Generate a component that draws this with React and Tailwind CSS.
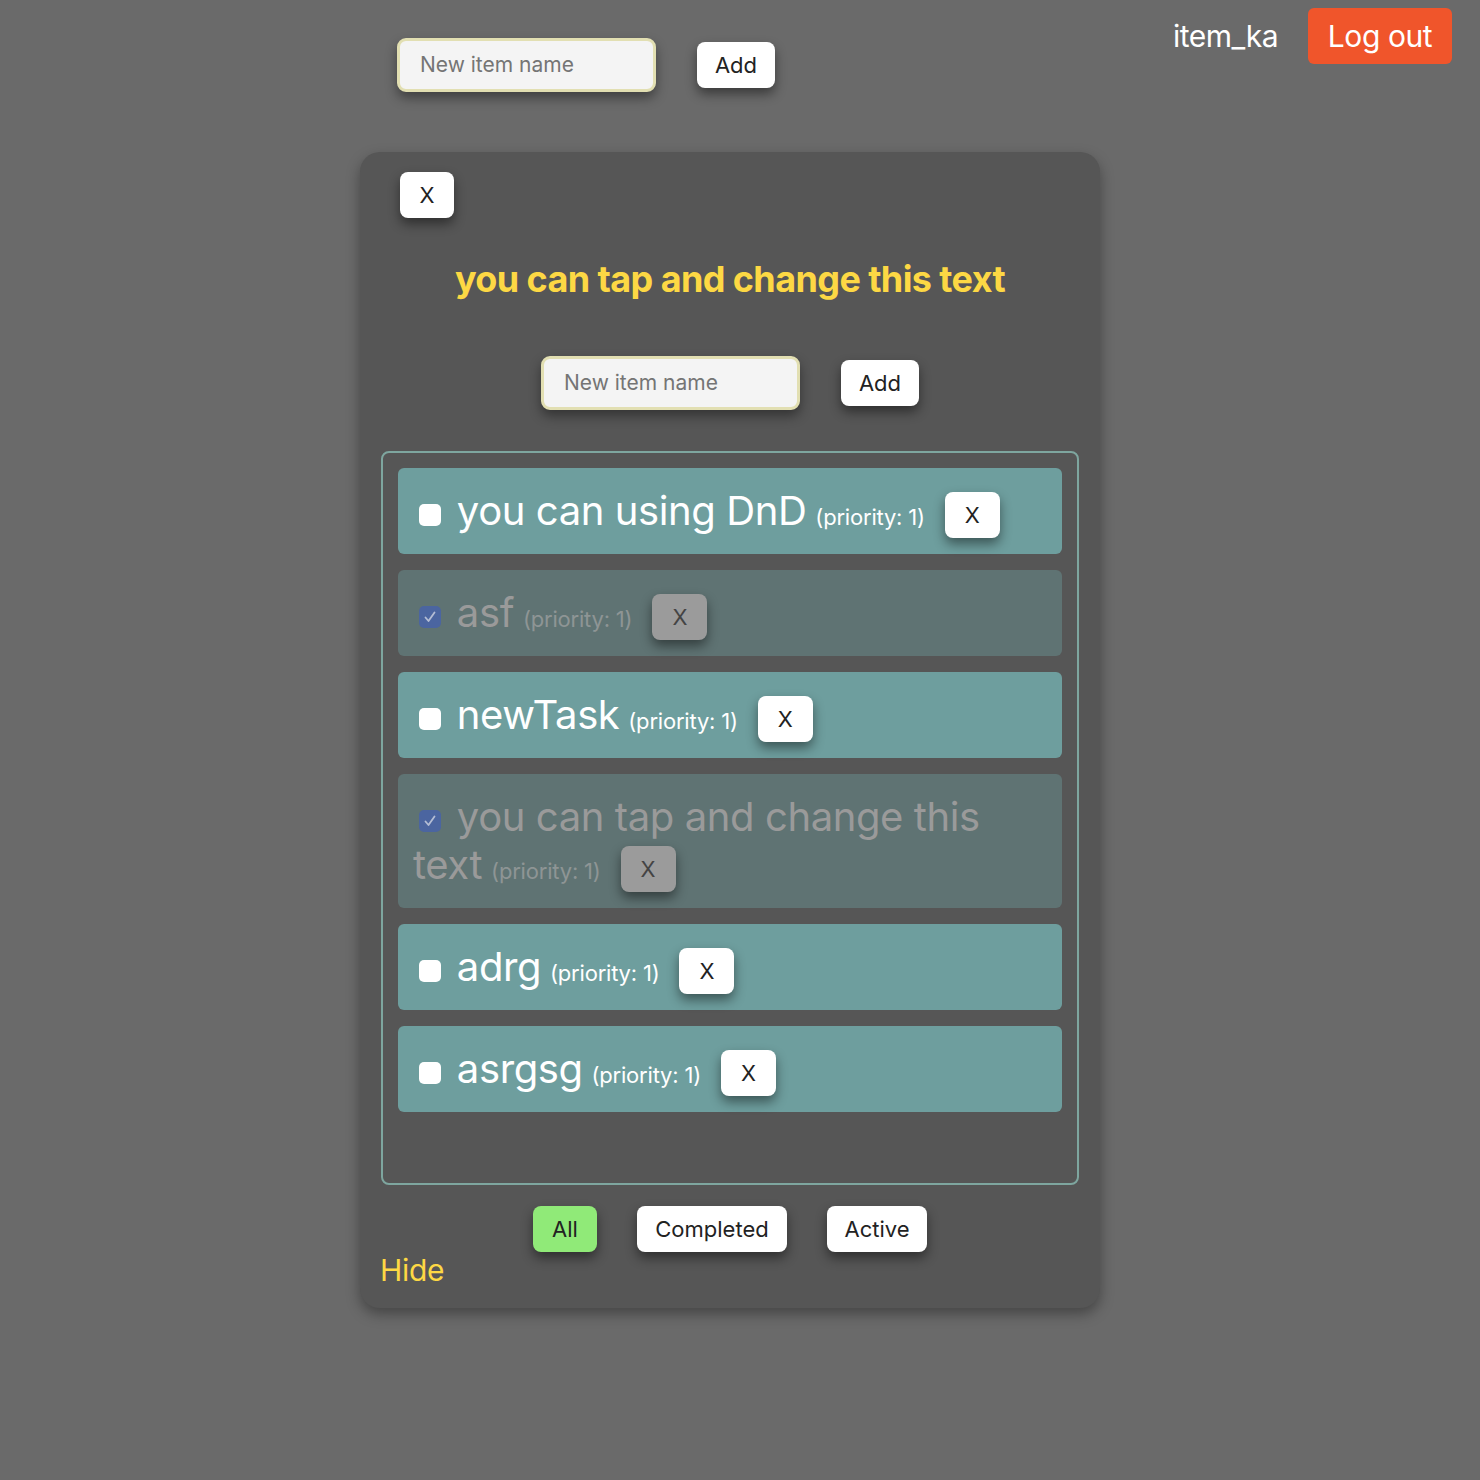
import React from "react";

const font = { fontFamily: "Inter, 'Noto Sans', sans-serif" };

function Btn({ children, className = "" }) {
  return (
    <button
      className={`inline-flex items-center justify-center h-[46px] rounded-[8px] bg-white text-[#222] text-[22px] shadow-[0_6px_12px_rgba(0,0,0,0.45)] ${className}`}
    >
      {children}
    </button>
  );
}

function AddForm() {
  return (
    <div className="flex items-center">
      <div className="w-[259px] h-[54px] rounded-[9px] border-[3px] border-[#e2dfb2] bg-[#f4f4f4] flex items-center pl-[20px] text-[21px] text-[#757575] shadow-[0_6px_12px_rgba(0,0,0,0.4)]">
        New item name
      </div>
      <Btn className="ml-[41px] w-[78px]">Add</Btn>
    </div>
  );
}

function Item({ text, done }) {
  return (
    <div
      className={`rounded-[6px] px-[15px] pt-[19px] pb-[19px] leading-[48px] text-[40px] tracking-[-0.4px] ${
        done ? "bg-[#5f7373]" : "bg-[#6e9e9e]"
      }`}
    >
      <span
        className={`inline-flex align-middle items-center justify-center w-[22px] h-[22px] rounded-[5px] ml-[6px] mr-[5px] -my-[10px] relative top-[1px] ${
          done ? "bg-[#4b65a0]" : "bg-white"
        }`}
      >
        {done && (
          <svg width="18" height="18" viewBox="0 0 18 18">
            <path d="M4.5 9.5 L7.5 13 L13.5 4.5" fill="none" stroke="#b4bdd4" strokeWidth="1.8" strokeLinecap="round" strokeLinejoin="round" />
          </svg>
        )}
      </span>{" "}
      <span className={done ? "text-[#9a9a9a]" : "text-white"}>{text}</span>{" "}
      <span className={`-ml-[2px] text-[22px] leading-none tracking-[-0.2px] ${done ? "text-[#8e9595]" : "text-white"}`}>(priority: 1)</span>
      <span
        className={`inline-flex align-middle items-center justify-center w-[55px] h-[46px] rounded-[8px] ml-[20px] -my-[12px] text-[22px] tracking-normal leading-none relative top-[1px] shadow-[0_6px_12px_rgba(0,0,0,0.45)] ${
          done ? "bg-[#9b9b9b] text-[#444]" : "bg-white text-[#222]"
        }`}
      >
        X
      </span>
    </div>
  );
}

export default function App() {
  const items = [
    ["you can using DnD", false],
    ["asf", true],
    ["newTask", false],
    ["you can tap and change this text", true],
    ["adrg", false],
    ["asrgsg", false],
  ];
  return (
    <div className="min-h-[1480px] bg-[#6a6a6a] relative" style={font}>
      <div className="flex items-start">
        <div className="pl-[397px] pt-[38px]">
          <AddForm />
        </div>
        <div className="ml-auto mr-[28px] mt-[8px] flex items-center">
          <span className="text-white text-[30px] mr-[30px] tracking-[-0.5px]">item_ka</span>
          <button className="h-[56px] w-[144px] rounded-[6px] bg-[#f0552b] text-white text-[30px] tracking-[-0.4px]">
            Log out
          </button>
        </div>
      </div>

      <div className="ml-[360px] mt-[60px] w-[740px] rounded-[20px] bg-[#565656] shadow-[0_6px_14px_rgba(0,0,0,0.35)] pt-[20px] pb-[20px] pl-[21px] pr-[21px]">
        <Btn className="ml-[19px] w-[54px]">X</Btn>
        <div className="mt-[36px] text-center text-[36px] font-bold text-[#fdd844] leading-[50px] tracking-[-0.6px]">
          you can tap and change this text
        </div>
        <div className="mt-[52px] flex justify-center">
          <AddForm />
        </div>
        <div className="mt-[41px] rounded-[8px] border-2 border-[#7ea69f] px-[15px] pt-[15px] pb-[71px] flex flex-col gap-[16px]">
          {items.map(([t, d], i) => (
            <Item key={i} text={t} done={d} />
          ))}
        </div>
        <div className="mt-[21px] flex justify-center gap-[40px]">
          <Btn className="w-[64px] bg-[#90ea78]!">All</Btn>
          <Btn className="w-[150px]">Completed</Btn>
          <Btn className="w-[100px]">Active</Btn>
        </div>
        <div className="-ml-[1px] text-[#fdd844] text-[30px] leading-[36px] tracking-[-0.3px]">Hide</div>
      </div>
    </div>
  );
}
